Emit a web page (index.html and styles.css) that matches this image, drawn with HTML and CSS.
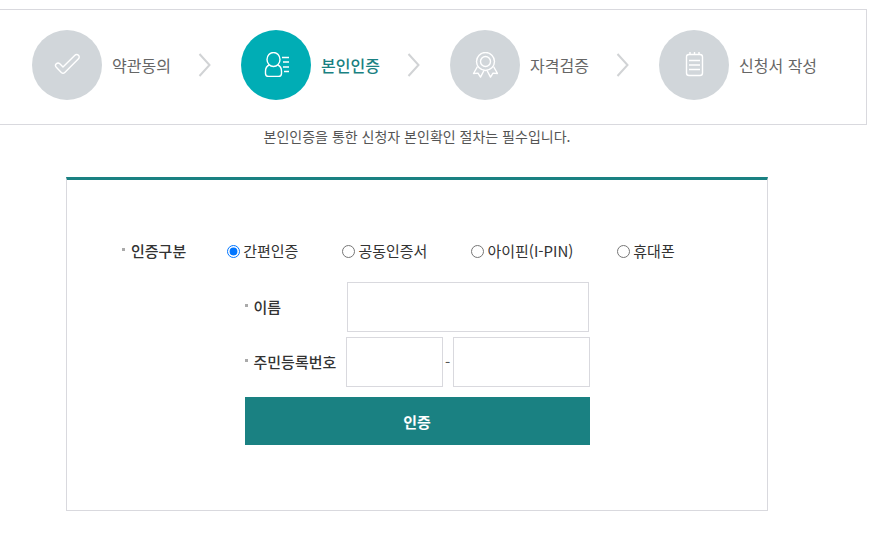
FILE: index.html
```html
<!DOCTYPE html>
<html lang="ko">
<head>
    <meta charset="UTF-8">
    <meta name="viewport" content="width=device-width, initial-scale=1.0">
    <title>본인인증</title>
    <link rel="stylesheet" href="styles.css">
</head>
<body>
    <ol class="steps">
        <li class="step">
            <span class="step-icon">
                <svg width="26" height="26" viewBox="0 0 26 26">
                    <path d="M2.300 11.800a2.500 2.500 0 0 1 3.500 0l3.200 3.300L20.900 3.200a2.500 2.500 0 0 1 3.600 3.500L10.800 20.500a2.500 2.500 0 0 1-3.500 0l-5-5.200a2.500 2.500 0 0 1 0-3.500z"/>
                </svg>
            </span>
            <span class="step-name">약관동의</span>
            <svg class="arrow" width="14" height="24" viewBox="0 0 14 24"><path d="M1.5 1l10 11-10 11"/></svg>
        </li>
        <li class="step active">
            <span class="step-icon">
                <svg width="26" height="26" viewBox="0 0 26 26">
                    <ellipse cx="10.500" cy="7.500" rx="6.500" ry="7"/>
                    <path d="M6.400 13C3.800 14 2.500 16.200 2.500 19.200v2.200a3 3 0 0 0 3 3h10a3 3 0 0 0 3-3v-2.200c0-3-1.300-5.200-3.900-6.200"/>
                    <path d="M19 5.500h7M20 10h6M20 15h6M21 19.500h5"/>
                </svg>
            </span>
            <span class="step-name">본인인증</span>
            <svg class="arrow" width="14" height="24" viewBox="0 0 14 24"><path d="M1.5 1l10 11-10 11"/></svg>
        </li>
        <li class="step">
            <span class="step-icon">
                <svg width="26" height="26" viewBox="0 0 26 26">
                    <circle cx="13.500" cy="9.500" r="9"/>
                    <circle cx="13.500" cy="9.500" r="5"/>
                    <path d="M5.500 14.500L1.500 21.500l4.500-.4 2.500 4 3.500-6.600M21.500 14.500l4 7-4.500-.4-2.500 4-3.500-6.600"/>
                </svg>
            </span>
            <span class="step-name">자격검증</span>
            <svg class="arrow" width="14" height="24" viewBox="0 0 14 24"><path d="M1.5 1l10 11-10 11"/></svg>
        </li>
        <li class="step">
            <span class="step-icon">
                <svg width="26" height="26" viewBox="0 0 26 26">
                    <rect x="5.500" y="2.500" width="16" height="21" rx="2.500"/>
                    <path d="M8 8.500h11M8 13h11M8 17.500h11M9 0v2.500M13.500 0v2.500M18 0v2.500"/>
                </svg>
            </span>
            <span class="step-name">신청서 작성</span>
        </li>
    </ol>

    <main class="content">
        <p class="notice">본인인증을 통한 신청자 본인확인 절차는 필수입니다.</p>

        <form class="auth-box">
            <div class="auth-type" role="radiogroup" aria-labelledby="auth-type-title">
                <span class="label" id="auth-type-title">인증구분</span>
                <label class="radio"><input type="radio" name="authType" value="simple" checked>간편인증</label>
                <label class="radio"><input type="radio" name="authType" value="cert">공동인증서</label>
                <label class="radio"><input type="radio" name="authType" value="ipin">아이핀(I-PIN)</label>
                <label class="radio"><input type="radio" name="authType" value="phone">휴대폰</label>
            </div>

            <div class="fields">
                <div class="field">
                    <label class="label" for="name">이름</label>
                    <input class="text name" type="text" id="name">
                </div>
                <div class="field">
                    <label class="label" for="jumin1">주민등록번호</label>
                    <input class="text jumin1" type="text" id="jumin1" maxlength="6">
                    <span class="dash">-</span>
                    <input class="text jumin2" type="password" id="jumin2" maxlength="7" aria-label="주민등록번호 뒷자리">
                </div>
                <button class="submit" type="button">인증</button>
            </div>
        </form>
    </main>
</body>
</html>
```
FILE: styles.css
```css
* {
    box-sizing: border-box;
}
body {
    margin: 0;
    padding-top: 9px;
    font-family: "Noto Sans CJK KR", sans-serif;
    font-size: 15px;
    line-height: 22px;
    color: #555;
    background-color: #fff;
}

/* 진행 단계 */
.steps {
    display: grid;
    grid-template-columns: repeat(4, 1fr);
    margin: 0 6px 0 0;
    padding: 20px 0 24px 30px;
    list-style: none;
    border: 1px solid #d9d9de;
    border-left: none;
}
.step {
    display: flex;
    align-items: center;
    padding: 0 27px 0 2px;
    font-size: 16px;
    color: #666;
}
.step-icon {
    display: flex;
    align-items: center;
    justify-content: center;
    width: 70px;
    height: 70px;
    margin-right: 10px;
    border-radius: 50%;
    background-color: #d1d6da;
}
.step-icon svg {
    fill: none;
    stroke: #fff;
    stroke-width: 1.4;
    stroke-linejoin: round;
}
.step-name {
    white-space: nowrap;
}
.arrow {
    margin-left: auto;
    fill: none;
    stroke: #d1d3d5;
    stroke-width: 2;
}
.active .step-icon {
    background-color: #00adb5;
}
.active .step-name {
    color: #1a8182;
    font-weight: 500;
}

/* 본인인증 */
.content {
    margin: 0 105px 0 66px;
}
.notice {
    margin: 0 0 30px;
    font-size: 14px;
    text-align: center;
}
.auth-box {
    padding: 60px 55px 65px;
    border: 1px solid #d9d9de;
    border-top: 3px solid #1a8182;
}
.auth-type {
    display: flex;
    align-items: center;
    color: #333;
}
.label {
    display: flex;
    gap: 6px;
    color: #333;
    font-weight: 500;
    white-space: nowrap;
}
.label::before {
    content: "";
    width: 3px;
    height: 3px;
    margin-top: 8px;
    background-color: #aaa;
}
.radio {
    display: flex;
    align-items: center;
    margin-left: 44px;
    white-space: nowrap;
}
.auth-type .label + .radio {
    margin-left: 41px;
}
.radio input {
    width: 13px;
    height: 13px;
    margin: 0 3px 0 0;
}
.fields {
    max-width: 345px;
    margin: 20px auto 0;
}
.field {
    display: flex;
    align-items: center;
    margin-bottom: 5px;
}
.field .label {
    width: 101px;
}
.text {
    min-width: 0;
    height: 50px;
    padding: 0 10px;
    border: 1px solid #d9d9de;
    font-family: inherit;
    font-size: 15px;
}
.name {
    flex: 1;
    margin: 0 1px;
}
.jumin1 {
    width: 97px;
}
.jumin2 {
    flex: 1;
}
.dash {
    width: 10px;
    text-align: center;
}
.submit {
    width: 100%;
    height: 48px;
    margin-top: 5px;
    border: none;
    background-color: #1a8182;
    color: #fff;
    font-family: inherit;
    font-size: 15px;
    font-weight: 700;
    cursor: pointer;
}
```
